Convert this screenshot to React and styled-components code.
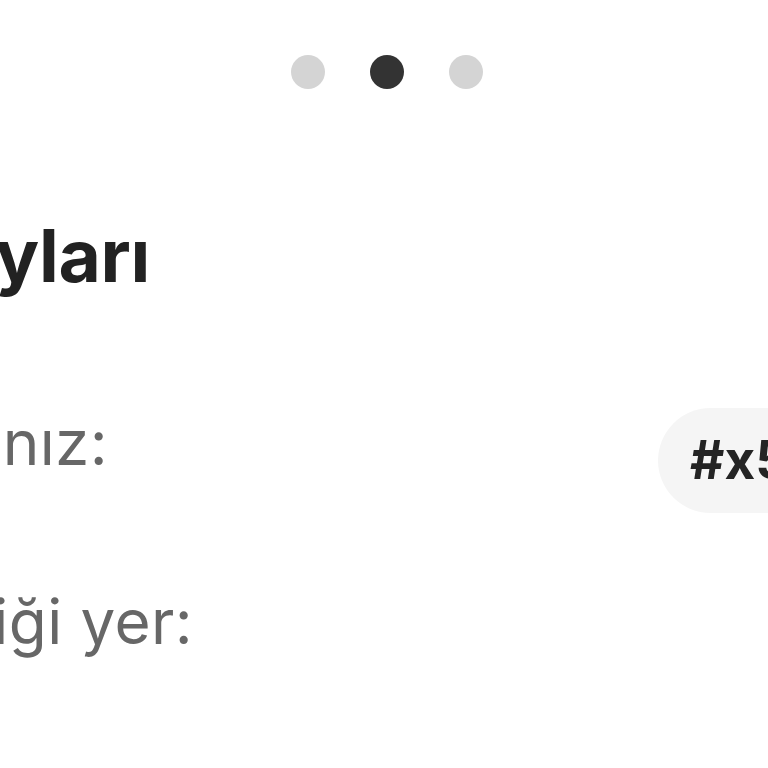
import React from "react";
import styled, { createGlobalStyle } from "styled-components";

const Global = createGlobalStyle`
  html, body { margin: 0; padding: 0; background: #ffffff; }
  body { overflow: hidden; font-family: Inter, "Noto Sans", "Liberation Sans", sans-serif; }
`;

const Screen = styled.div`
  width: 768px;
  height: 768px;
  overflow: hidden;
  display: flex;
  flex-direction: column;
  background: #ffffff;
`;

const Dots = styled.div`
  display: flex;
  justify-content: center;
  gap: 45px;
  margin-top: 55px;
  padding-left: 6px;
`;

const Dot = styled.span`
  width: 34px;
  height: 34px;
  border-radius: 50%;
  background: ${(p) => (p.$active ? "#333333" : "#d4d4d4")};
`;

const Line = styled.div`
  display: flex;
  justify-content: flex-end;
  width: ${(p) => p.$end}px;
  white-space: nowrap;
  flex-shrink: 0;
`;

const Title = styled.h1`
  margin: 130px 0 0;
  font-size: 73px;
  line-height: 73px;
  font-weight: 700;
  color: #222222;
  letter-spacing: -0.3px;
`;

const Row = styled.div`
  display: flex;
  align-items: flex-start;
  gap: ${(p) => p.$gap || 0}px;
  margin-top: ${(p) => p.$top}px;
  white-space: nowrap;
`;

const Label = styled.span`
  margin-top: ${(p) => p.$offset || 0}px;
  font-size: 62px;
  line-height: 62px;
  font-weight: 400;
  letter-spacing: 0.4px;
  color: #676767;
`;

const Pill = styled.div`
  flex-shrink: 0;
  height: 105px;
  padding: 0 40px 0 32px;
  border-radius: 53px;
  background: #f5f5f5;
  font-size: 53px;
  line-height: 105px;
  font-weight: 700;
  color: #242424;
`;

export default function App() {
  return (
    <Screen>
      <Global />
      <Dots>
        <Dot />
        <Dot $active />
        <Dot />
      </Dots>
      <Title>
        <Line $end={150}>Sipariş Detayları</Line>
      </Title>
      <Row $top={116} $gap={550}>
        <Line $end={108}>
          <Label $offset={4}>Sipariş numaranız:</Label>
        </Line>
        <Pill>#x5K29QF7</Pill>
      </Row>
      <Row $top={78}>
        <Line $end={193}>
          <Label>Teslim edildiği yer:</Label>
        </Line>
      </Row>
    </Screen>
  );
}
